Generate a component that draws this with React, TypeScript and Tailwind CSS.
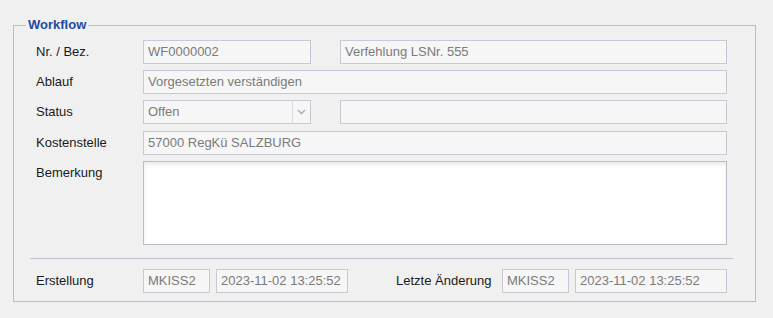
import React from 'react';

const font = { fontFamily: '"Liberation Sans", Arial, sans-serif' };

const Field: React.FC<{ value?: string; className?: string }> = ({ value = '', className = '' }) => (
  <div
    className={`h-[24px] border border-[#c9c9d6] bg-[#f6f6f6] text-[13px] leading-[22px] text-[#7b7b7b] pl-[4px] whitespace-nowrap overflow-hidden ${className}`}
  >
    {value}
  </div>
);

const Label: React.FC<{ text: string; top?: boolean }> = ({ text, top }) => (
  <div className={`w-[107px] shrink-0 text-[13px] text-[#1a1a1a] ${top ? 'leading-[24px]' : 'leading-[24px] self-center'}`}>
    {text}
  </div>
);

const App: React.FC = () => {
  return (
    <div className="w-[773px] h-[318px] bg-[#f0f0f0] pt-[17px] pl-[13px]" style={font}>
      <fieldset className="w-[743px] h-[285px] border border-[#bcbccc] p-0 m-0">
        <legend className="ml-[12px] px-[2px] text-[13px] leading-[16px] font-bold text-[#1f4b9e]">Workflow</legend>
        <div className="pl-[22px] pr-[28px] pt-[7px]">
          {/* Nr. / Bez. */}
          <div className="flex items-center">
            <Label text="Nr. / Bez." />
            <Field value="WF0000002" className="w-[168px]" />
            <Field value="Verfehlung LSNr. 555" className="ml-[29px] flex-1" />
          </div>

          {/* Ablauf */}
          <div className="flex items-center mt-[6px]">
            <Label text="Ablauf" />
            <Field value="Vorgesetzten verständigen" className="flex-1" />
          </div>

          {/* Status */}
          <div className="flex items-center mt-[6px]">
            <Label text="Status" />
            <div className="w-[168px] h-[24px] border border-[#c9c9d6] bg-[#f6f6f6] flex">
              <div className="flex-1 pl-[4px] text-[13px] leading-[22px] text-[#7b7b7b]">Offen</div>
              <div className="w-[18px] border-l border-[#d8d8e0] flex items-center justify-center">
                <svg width="9" height="6" viewBox="0 0 9 6">
                  <path d="M1 1 L4.5 4.5 L8 1" stroke="#b4b4b8" strokeWidth="1.6" fill="none" />
                </svg>
              </div>
            </div>
            <Field className="ml-[29px] flex-1" />
          </div>

          {/* Kostenstelle */}
          <div className="flex items-center mt-[7px]">
            <Label text="Kostenstelle" />
            <Field value="57000 RegKü SALZBURG" className="flex-1" />
          </div>

          {/* Bemerkung */}
          <div className="flex items-start mt-[6px]">
            <Label text="Bemerkung" top />
            <div className="flex-1 h-[84px] border border-[#bcbcc8] bg-white shadow-[inset_0_3px_4px_rgba(0,0,0,0.08)]" />
          </div>

          <div className="-ml-[6px] -mr-[6px] mt-[13px] border-t border-[#c0c0cc]" />

          {/* Erstellung / Letzte Änderung */}
          <div className="flex items-center mt-[10px]">
            <Label text="Erstellung" />
            <Field value="MKISS2" className="w-[67px]" />
            <Field value="2023-11-02 13:25:52" className="ml-[6px] w-[132px]" />
            <div className="ml-[48px] w-[106px] text-[13px] leading-[24px] text-[#1a1a1a] whitespace-nowrap">Letzte Änderung</div>
            <Field value="MKISS2" className="w-[67px]" />
            <Field value="2023-11-02 13:25:52" className="ml-[6px] flex-1" />
          </div>
        </div>
      </fieldset>
    </div>
  );
};

export default App;
